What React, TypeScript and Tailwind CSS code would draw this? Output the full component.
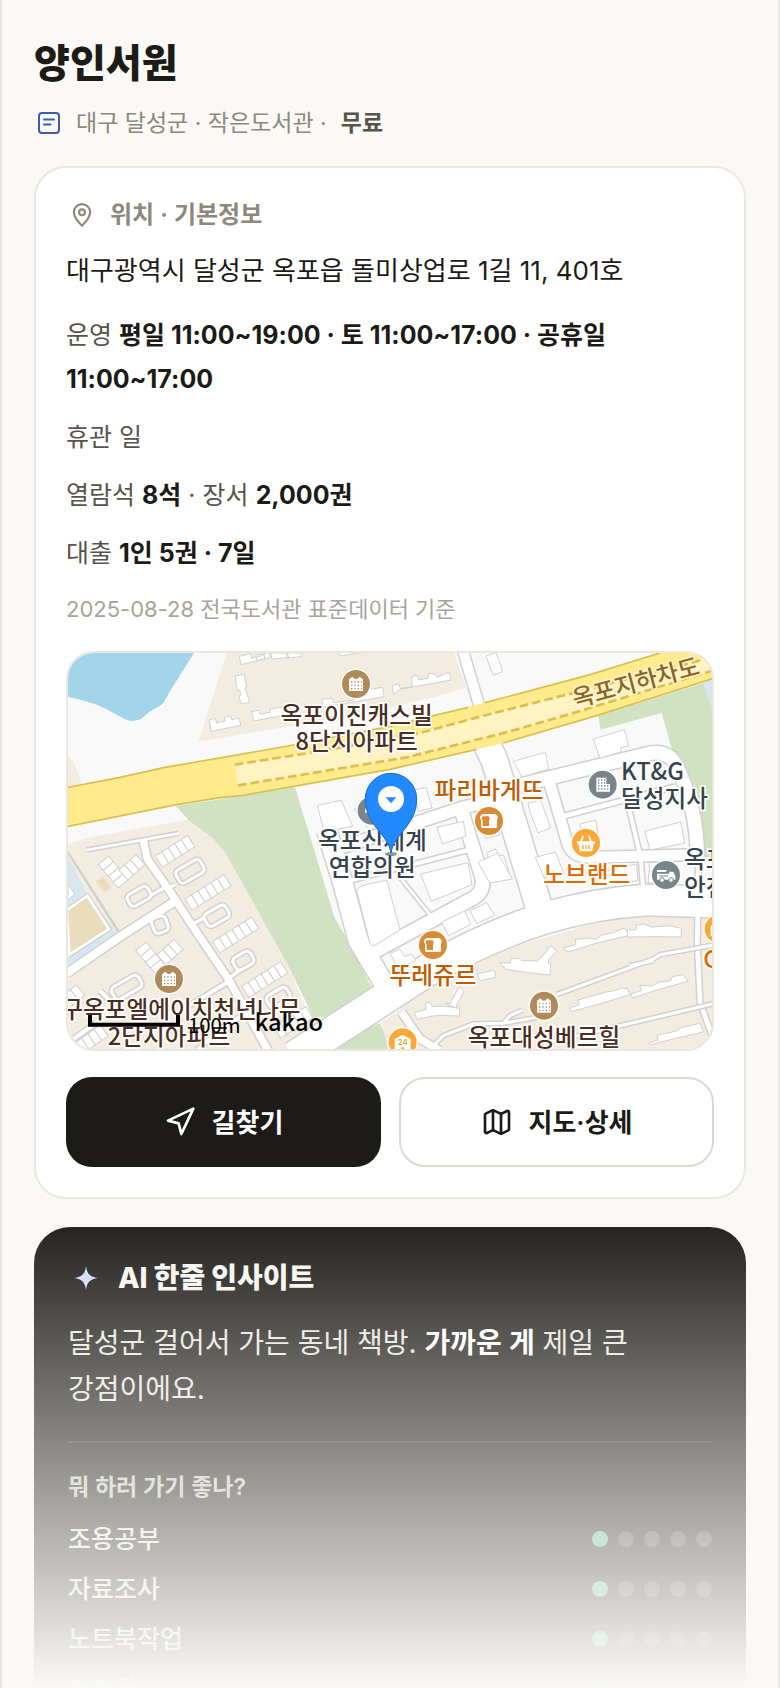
import React from "react";
import { Map, Navigation } from "lucide-react";

const purposes = [
  { label: "조용공부", score: 1 },
  { label: "자료조사", score: 1 },
  { label: "노트북작업", score: 1 },
  { label: "아이랑", score: 1 },
];

const BEIGE = "#f3ede1";
const GREEN = "#d1e2c3";
const LINE = "#d0d0d0";

// wide streets, drawn as a grey casing with white on top
const roads: { d: string; w: number }[] = [
  { d: "M1990 775L1760 768Q1600 778 1450 824T1120 968L940 1085L700 1240", w: 92 },
  { d: "M1280 300L1302 345L1440 800", w: 78 },
  { d: "M1206 10L1262 200", w: 30 },
  { d: "M845 610L1200 493L1310 465", w: 36 },
  { d: "M1203 495L1266 700Q1275 745 1235 765L930 930", w: 40 },
  { d: "M850 715L1225 618", w: 12 },
  { d: "M800 560L848 715L895 890L985 1040", w: 58 },
  { d: "M1020 700L1110 812", w: 8 },
  { d: "M1345 432L1760 330Q1832 312 1856 380Q1912 500 1912 640", w: 40 },
  { d: "M1470 420L1520 590Q1532 640 1590 640L1910 632", w: 32 },
  { d: "M1490 522L1845 428", w: 14 },
  { d: "M1704 480L1742 640L1750 740", w: 12 },
  { d: "M1915 640L1912 900L1920 1075L1958 1180", w: 14 },
];

const lanes: { d: string; w: number }[] = [
  { d: "M80 618L357 568", w: 8 },
  { d: "M250 590L262 645L325 735L400 850L505 1005L630 1230", w: 22 },
  { d: "M20 988L180 878L340 775", w: 24 },
  { d: "M20 1200L110 1135M120 1040L165 1085M380 1090L510 1010M410 1220L500 1140L560 1110", w: 12 },
  { d: "M320 735L345 722M275 752L312 732M400 840L430 822M290 800L275 825M510 1000L545 975", w: 10 },
  { d: "M1490 1052L1780 945L1800 932L1957 904M1710 965L1780 950", w: 9 },
  { d: "M1110 1215L1150 1175L1240 1140L1330 1138L1420 1122L1490 1095M1330 1138L1350 1115L1388 1098", w: 9 },
  { d: "M1470 1195L1957 1080", w: 9 },
  { d: "M1025 1105L1080 1185L1140 1220", w: 22 },
];

const loops = [
  [390, 682, 84, 44, -30],
  [237, 757, 70, 40, -30],
  [470, 815, 74, 42, -30],
  [300, 842, 44, 48, -20],
  [200, 1030, 92, 42, -30],
  [550, 950, 60, 42, -30],
  [655, 1060, 70, 40, -30],
];

// rows of flats: x, y, angle, number of cells
const strips = [
  [345, 622, -32, 5],
  [444, 745, -32, 6],
  [527, 873, -32, 6],
  [614, 1007, -32, 6],
  [700, 1135, -32, 5],
  [160, 684, 50, 4],
  [216, 670, -42, 3],
  [272, 942, 50, 4],
  [330, 924, -42, 3],
  [35, 1060, -40, 3],
  [95, 1186, -35, 4],
];

const houses = [
  "M538 37l34-8 3 14 38-10 2 12-72 17zM588 34l40-8 4 14-42 10zM632 27h50l4 14-50 4zM680 27h42l4 11-46 4z",
  "M526 96l26-5 9 38-8 3 4 5 12 38-26 4-6-22 6-4-4-15-8 2z",
  "M448 228l18-5 4 14 26-6-2-12 18-4 4 13 20-6 7 22-90 18z",
  "M575 203l20-4 6 12 30-6-2-10 60-8 6 22-114 22z",
  "M786 166l30-4 4 14 62-8 4-24 82-14 4 28-184 32z",
  "M834 20h80l-2 4-70 12z",
  "M997 124l20-4 4 14 36-6-3-30 18-4 4 14 28-6 3-14 18 2 6 10 36-16 6 24-154 28 -19 16z",
  "M1278 36l30-10 20 56-28 12z",
  "M772 484l72-15 34 78-86 16z",
  "M882 495l60-12 26 62-40 12z",
  "M1055 440l43-10 18 62-40 10z",
  "M1360 352l96-27 10 50-80 24z",
  "M1600 285l93-28 13 48-24 6 2 12-64 20z",
  "M1404 478l38-10 30 84-38 14-24-62z",
  "M1130 550l80-18 8 44-70 24z",
  "M1262 535l58-12-2 50-42 10z",
  "M1280 625l28-10 8 20 14-2 20 60-46 16z",
  "M1754 562l108-28 12 64-104 20z",
  "M1560 540l48-12 6 44-40 8z",
  "M1426 640l60-16 26 66-60 10z",
  "M1600 690l130-30 4 50-140 18z",
  "M1770 655h36v62h-42z",
  "M890 740q6-14 30-18l60-14 40 150-76 46q-10 4-14-6z",
  "M1082 690l142-34 12 66-122 50z",
  "M1255 655l58-28 44 78-68 12z",
  "M1144 835l70-34 18 40-66 34z",
  "M1230 800l50-24 24 38-54 24z",
  "M990 928l30-12 14 22 20-8 14 18-52 28z",
  "M1063 1106l36-10-4-18 14-4 8 14 26-2 38 4 18-2v28l-50-2-32 2-46 10z",
  "M1154 1078l16 2 28-52 14 14-24 44 8 8z",
  "M1318 956l34 1v-14h24l10 8 24-2 20 2 16-12 26-34 18 16-24 26-2 10 8 2-2 34-72-8-58-8z",
  "M1510 912l38-10-2-16 38-4 24 4 16-12 36-8 34-14 14 22-100 24-84 26z",
  "M1702 858l26-1 2-14 24-2 20 8 30-2 24-2 36 8v26l-76-1-86 1z",
  "M1528 1092l30-10-4-14 34-10 50-14 26-4 20-8 18 2 8 18-92 28-82 22z",
  "M1712 1050l32-10-4-16 34 2 24-12 34-4 6-12 30-6 16 20-94 26-72 24z",
  "M1764 1198l30-10-2-14 60-14 14-10 54-12 10 26-96 22-62 16z",
  "M1252 990l50-12 6 22-48 10z",
];

function Poi({ x, y, color, kind }: { x: number; y: number; color: string; kind: string }) {
  return (
    <g transform={`translate(${x} ${y})`}>
      <circle r="44" fill={color} stroke="#fff" strokeWidth="4" />
      {kind === "apt" && (
        <>
          <path d="M-21 21V-14l10-8 8 8 3-2 3 2 8-8 10 8v35z" fill="#fff" />
          <path d="M-15-6H18M-15 4H18M-15 14H18" stroke={color} strokeWidth="4" strokeDasharray="4 6" />
        </>
      )}
      {kind === "office" && (
        <>
          <path d="M-19 21V-21H11V-2H22V21z" fill="#fff" />
          <path d="M-14-14H8M-14-5H8M-14 4H18M-14 13H18" stroke={color} strokeWidth="4" strokeDasharray="4 5" />
        </>
      )}
      {kind === "bread" && (
        <>
          <path d="M-15-21H17q10 2 9 13l-2 5v20q0 4-5 4H-19q-5 0-5-5V-3q-4-4-3-10 2-7 12-8z" fill="#fff" />
          <path d="M-19-14H-2q7 4 2 13V15H-19V-2q-6-7 0-12z" fill={color} />
        </>
      )}
      {kind === "basket" && (
        <>
          <path d="M-27-5H27v7h-4l-4 23H-19L-23 2h-4z" fill="#fff" />
          <path d="M-15-5L-8-22M15-5L8-22" stroke="#fff" strokeWidth="5" />
          <path d="M-9 6v12M0 6v12M9 6v12" stroke={color} strokeWidth="4" />
        </>
      )}
      {kind === "truck" && (
        <>
          <path d="M-27-4H10v-6h12l6 14v10H-27zM-27-15h28v6h-28z" fill="#fff" />
          <circle cx="-12" cy="15" r="7" fill="#fff" stroke={color} strokeWidth="3" />
          <circle cx="15" cy="15" r="7" fill="#fff" stroke={color} strokeWidth="3" />
          <path d="M-20 3H6" stroke={color} strokeWidth="3" />
        </>
      )}
      {kind === "plus" && <path d="M-20-6H-6V-20H6V-6H20V6H6V20H-6V6H-20z" fill="#fff" />}
      {kind === "store" && (
        <>
          <path d="M-24 22V-10L0-23 24-10V22z" fill="#fff" />
          <path d="M-5 22v-5l5-4 5 4v5z" fill={color} />
          <text y="8" textAnchor="middle" fontSize="23" fontWeight="700" fill={color}>24</text>
        </>
      )}
    </g>
  );
}

function MapView() {
  return (
    <svg viewBox="24 27 1932 1188" preserveAspectRatio="xMidYMid slice" className="block h-full w-full" role="img" aria-label="지도">
      <rect x="0" y="0" width="2000" height="1250" fill="#f9f9f9" />
      <path d="M24 27H402L328 145L312 175Q305 185 268 203L243 225Q213 236 195 226L140 196Q110 178 24 158z" fill="#a3d5ea" />
      <path d="M500 27H1182L1219 131L1100 165L880 215L415 293zM24 335L42 355L65 418L24 428z" fill={BEIGE} />
      <path d="M24 600L90 580L385 527L455 580L495 625L685 965L735 1090L820 1220H24z" fill={BEIGE} />
      <path d="M348 486L550 455L705 430L780 675L823 820L860 882L940 1040L822 1120L760 1120L685 965L495 625L455 580L385 528z" fill={GREEN} />
      <path d="M1615 215L1930 118L1957 190V640H1935L1900 420L1840 330L1805 207L1622 257z" fill={GREEN} />
      <path d="M1930 118L1957 103V195z" fill="#d8e6ef" />
      <path d="M24 640L85 755L172 870L24 965z" fill="#d8e6ef" />
      <path d="M20 798L82 755L147 855L28 932z" fill="#e9ddbd" stroke="#fff" strokeWidth="8" />
      <path d="M20 792L84 748L155 856L28 940" fill="none" stroke="#c9b79a" strokeWidth="2" />
      <path d="M24 720L44 750L24 768z" fill="#fff" stroke={LINE} strokeWidth="3" />
      <path d="M110 712l20-14 22 34-20 14z" fill="#e9ddbd" stroke="#efe4c8" strokeWidth="5" />
      <path d="M24 625L180 870" stroke={LINE} strokeWidth="7" />
      <path d="M780 1215L960 1137L995 1215z" fill={GREEN} />
      <path
        d="M985 1220L965 1135L1010 1104L1025 1088Q1240 940 1380 904Q1560 848 1690 820Q1740 812 1910 820H1980V1220z"
        fill={BEIGE}
      />

      <g fill="none" strokeLinejoin="round">
        {roads.map((r) => (
          <path key={r.d} d={r.d} stroke={LINE} strokeWidth={r.w + 9} />
        ))}
        {roads.map((r) => (
          <path key={r.d} d={r.d} stroke="#fff" strokeWidth={r.w} />
        ))}
        {lanes.map((r) => (
          <path key={r.d} d={r.d} stroke={LINE} strokeWidth={r.w + 9} />
        ))}
        {loops.map(([x, y, w, h, a]) => (
          <g key={`${x}-${y}`} transform={`translate(${x} ${y}) rotate(${a})`}>
            <rect x={-w / 2} y={-h / 2} width={w} height={h} rx="13" stroke={LINE} strokeWidth="18" />
            <rect x={-w / 2} y={-h / 2} width={w} height={h} rx="13" stroke="#fff" strokeWidth="9" />
          </g>
        ))}
        {lanes.map((r) => (
          <path key={r.d} d={r.d} stroke="#fff" strokeWidth={r.w} />
        ))}
      </g>

      <g fill="#fff" stroke="#d0d0d0" strokeWidth="3">
        {strips.map(([x, y, a, n]) => (
          <g key={`${x}-${y}`} transform={`translate(${x} ${y}) rotate(${a})`}>
            {Array.from({ length: n }, (_, i) => (
              <rect key={i} x={(i - n / 2) * 23} y="-20" width="23" height="40" />
            ))}
          </g>
        ))}
        {houses.map((d) => (
          <path key={d} d={d} />
        ))}
      </g>

      <path
        d="M20 431L180 400L315 370L520 335L700 303L990 247L1120 215L1290 172L1590 92L1800 27H1960V103L1610 215L1330 297L1250 316L990 376L550 454L480 461L350 482L20 548z"
        fill="#ffea8c"
      />
      <path d="M524 362L760 325L1080 267L1260 218L1535 148L1957 40V80L1550 204L1350 262L1040 340L534 424z" fill="#fff3c4" />
      <g fill="none" stroke="#d6c052">
        <path
          d="M20 431L180 400L315 370L520 335L700 303L990 247L1120 215L1225 190M1275 176L1590 92L1800 27M20 548L350 482L480 461L550 454L990 376L1250 316M1330 297L1610 215L1960 103"
          strokeWidth="5"
        />
        <path d="M524 362L760 325L1080 267L1260 218L1535 148L1957 40M534 424L1040 340L1350 262L1550 204L1957 80" strokeWidth="8" strokeDasharray="26 12" />
      </g>

      <Poi x={888} y={120} color="#b08a59" kind="apt" />
      <Poi x={327} y={1005} color="#b08a59" kind="apt" />
      <Poi x={1452} y={1085} color="#b08a59" kind="apt" />
      <Poi x={1287} y={531} color="#d98c36" kind="bread" />
      <Poi x={1119} y={903} color="#d98c36" kind="bread" />
      <Poi x={1628} y={422} color="#78868c" kind="office" />
      <Poi x={1578} y={597} color="#fba836" kind="basket" />
      <Poi x={1818} y={693} color="#78868c" kind="truck" />
      <Poi x={935} y={500} color="#78868c" kind="plus" />
      <Poi x={1028} y={1195} color="#fba836" kind="store" />
      <Poi x={1976} y={855} color="#fba836" kind="store" />

      <g
        fontSize="71"
        fontWeight="500"
        textAnchor="middle"
        stroke="#fff"
        strokeWidth="10"
        strokeLinejoin="round"
        style={{ paintOrder: "stroke", fontFamily: '"Noto Sans CJK KR", sans-serif' }}
      >
        <g fill="#4a2e22">
          <text x="890" y="239">옥포이진캐스빌</text>
          <text x="890" y="318">8단지아파트</text>
          <text x="330" y="1123">대구옥포엘에이치천년나무</text>
          <text x="327" y="1203">2단지아파트</text>
          <text x="1452" y="1205">옥포대성베르힐</text>
        </g>
        <g fill="#c05c00">
          <text x="1287" y="465">파리바게뜨</text>
          <text x="1119" y="1020">뚜레쥬르</text>
        </g>
        <g fill="#e06a00">
          <text x="1580" y="716">노브랜드</text>
          <text x="1930" y="973" textAnchor="start">CU</text>
        </g>
        <g fill="#35444c">
          <text x="937" y="615">옥포신세계</text>
          <text x="937" y="695">연합의원</text>
          <text x="1683" y="408" textAnchor="start">KT&amp;G</text>
          <text x="1683" y="488" textAnchor="start">달성지사</text>
          <text x="1872" y="672" textAnchor="start">옥포</text>
          <text x="1872" y="757" textAnchor="start">안전</text>
        </g>
        <text transform="translate(1734 140) rotate(-15)" fill="#86662b" stroke="#fff3c4">옥포지하차도</text>
      </g>

      <ellipse cx="993" cy="630" rx="18" ry="6" fill="#000" opacity="0.4" />
      <path d="M993 627C985 570 916 545 916 465A77 77 0 0 1 1070 465C1070 545 1001 570 993 627z" fill="#2389ff" stroke="#1767d0" strokeWidth="3" />
      <circle cx="993" cy="465" r="39" fill="#fff" />
      <path d="M977 460H1009L993 478z" fill="#2389ff" />

      <path d="M90 1113V1142H354V1113" fill="none" stroke="#000" strokeWidth="12" />
      <g style={{ fontFamily: '"Noto Sans CJK KR", sans-serif' }}>
        <text x="384" y="1166" fontSize="61" fontWeight="400">100m</text>
        <text x="584" y="1160" fontSize="71" fontWeight="500">kakao</text>
      </g>
    </svg>
  );
}

function Dots({ score }: { score: number }) {
  return (
    <span className="flex gap-[10px]">
      {[1, 2, 3, 4, 5].map((n) => (
        <span key={n} className={n <= score ? "size-4 rounded-full bg-[#5dbb94]" : "size-4 rounded-full bg-white/20"} />
      ))}
    </span>
  );
}

export default function App() {
  return (
    <div className="relative h-screen overflow-hidden border-x-2 border-[#e9e7e0] bg-[#faf9f5] px-8 pt-10 font-[Inter,'Noto_Sans_CJK_KR',sans-serif] break-keep text-[#1c1b17]">
      <h1 className="text-[39px] leading-[46px] font-extrabold">양인서원</h1>
      <div className="mt-[19px] flex items-center text-[23px] leading-[36px] text-[#8c887c]">
        <span className="mr-3 flex w-[30px] justify-center">
          <svg width="24" height="24" viewBox="0 0 24 24" fill="none" stroke="#3f5bb0" strokeWidth="2" strokeLinecap="round">
            <rect x="2" y="2" width="20" height="20" rx="3" />
            <path d="M7 8.5H17M7 13.5H13.500" />
          </svg>
        </span>
        <span>대구 달성군 · 작은도서관 ·</span>
        <b className="ml-[14px] font-semibold text-[#57544a]">무료</b>
      </div>

      <section className="mt-[25px] rounded-[32px] border-2 border-[#e9e7e0] bg-white p-[30px]">
        <h2 className="flex items-center text-[24px] leading-[34px] font-semibold text-[#8c887c]">
          <span className="mr-3 flex w-8 justify-center">
            <svg width="26" height="26" viewBox="0 0 24 24" fill="none" stroke="currentColor" strokeWidth="2" strokeLinejoin="round">
              <path d="M12 22C15.500 18.500 19.500 14.500 19.500 9.500A7.500 7.500 0 0 0 4.500 9.500C4.500 14.500 8.500 18.500 12 22z" />
              <circle cx="12" cy="9.500" r="2.700" />
            </svg>
          </span>
          위치 · 기본정보
        </h2>
        <p className="mt-[17px] text-[26px] leading-[44px]">대구광역시 달성군 옥포읍 돌미상업로 1길 11, 401호</p>
        <div className="mt-5 flex flex-col gap-[14px] text-[25px] leading-[44px] text-[#57544a] [&_b]:font-bold [&_b]:text-[#1c1b17]">
          <p>
            운영 <b>평일 11:00~19:00 · 토 11:00~17:00 · 공휴일 11:00~17:00</b>
          </p>
          <p>휴관 일</p>
          <p>
            열람석 <b>8석</b> · 장서 <b>2,000권</b>
          </p>
          <p>
            대출 <b>1인 5권 · 7일</b>
          </p>
        </div>
        <p className="mt-4 text-[22px] leading-[36px] text-[#a8a498]">2025-08-28 전국도서관 표준데이터 기준</p>

        <div className="mt-6 h-[400px] overflow-hidden rounded-[28px] border-2 border-[#e9e7e0]">
          <MapView />
        </div>

        <div className="mt-[26px] grid grid-cols-2 gap-[18px] text-[26px] font-semibold">
          <button className="flex h-[90px] items-center justify-center gap-4 rounded-[26px] bg-[#1c1b17] text-white">
            <Navigation size={32} strokeWidth={2} />
            길찾기
          </button>
          <button className="flex h-[90px] items-center justify-center gap-4 rounded-[26px] border-2 border-[#dcdad0] bg-white">
            <Map size={32} strokeWidth={2} />
            지도·상세
          </button>
        </div>
      </section>

      <section className="mt-7 rounded-[36px] bg-[#1c1b17] p-[34px] text-[#e9e7e0]">
        <h2 className="flex items-center text-[28px] leading-[34px] font-extrabold text-[#f6f5f0]">
          <span className="mr-[14px] flex w-9 justify-center">
            <svg width="24" height="24" viewBox="0 0 24 24" fill="#d3dcfa">
              <path d="M12 0C13 8 16 11 24 12C16 13 13 16 12 24C11 16 8 13 0 12C8 11 11 8 12 0z" />
            </svg>
          </span>
          AI 한줄 인사이트
        </h2>
        <p className="mt-[25px] text-[28px] leading-[46px]">
          달성군 걸어서 가는 동네 책방. <b className="font-semibold text-white">가까운 게</b> 제일 큰 강점이에요.
        </p>
        <div className="mt-[29px] border-t-2 border-white/10 pt-[27px]">
          <h3 className="text-[23px] leading-[34px] font-semibold text-[#c9c6bb]">뭐 하러 가기 좋나?</h3>
          <ul className="mt-[17px] flex flex-col gap-[14px] text-[25px] leading-[36px] font-medium">
            {purposes.map((p) => (
              <li key={p.label} className="flex items-center justify-between">
                {p.label}
                <Dots score={p.score} />
              </li>
            ))}
          </ul>
        </div>
      </section>

      <div className="pointer-events-none absolute inset-x-0 bottom-0 h-[480px] bg-linear-to-b from-[#faf9f5]/0 to-[#faf9f5]" />
    </div>
  );
}
